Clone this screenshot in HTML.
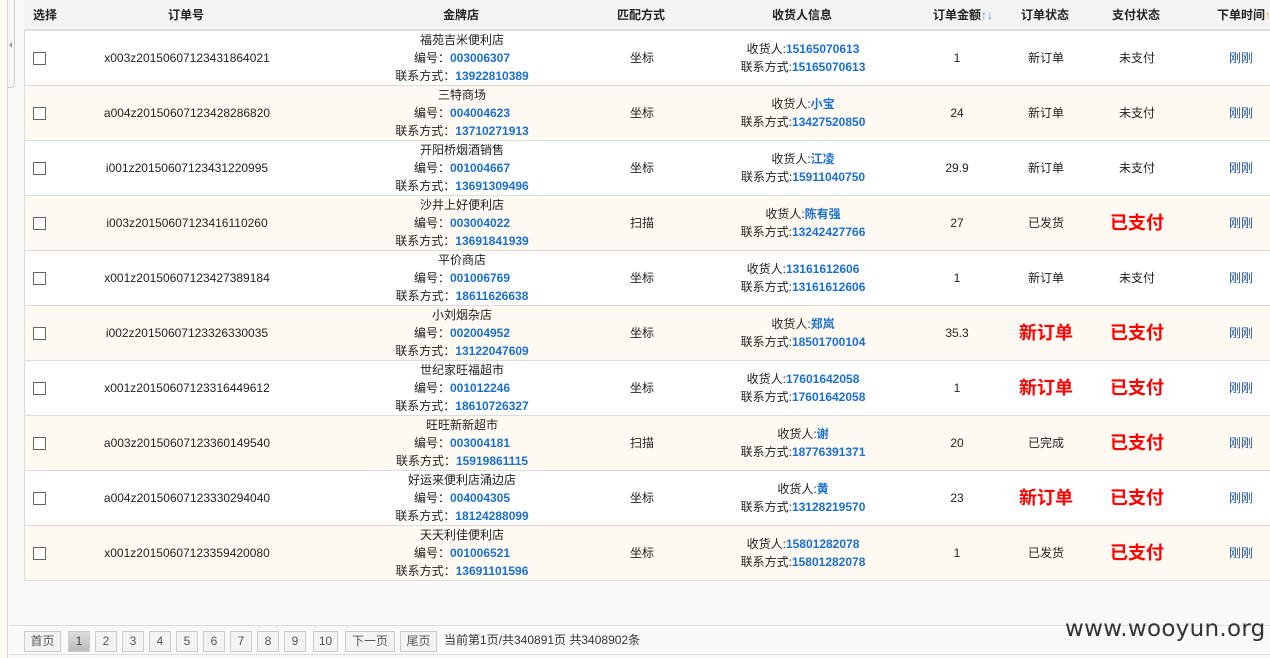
<!DOCTYPE html>
<html><head><meta charset="utf-8"><style>
*{margin:0;padding:0;box-sizing:border-box}
body{width:1270px;height:658px;overflow:hidden;background:#fafafa;font-family:"Liberation Sans","Noto Sans CJK SC",sans-serif;font-size:12px;color:#222;position:relative}
.strip{position:absolute;left:0;top:0;width:8px;height:658px;background:#fffaf0;border-right:1px solid #d8d8d8}
.bar{position:absolute;left:8px;top:0;width:7px;height:88px;border:1px solid #ccc;border-left:none;border-top:none;border-radius:0 0 4px 0;background:#f6f6f6}
.bar:after{content:"";position:absolute;left:1px;top:42px;border:3px solid transparent;border-right:3px solid #999;border-left:none}
.tbl{position:absolute;left:24px;top:0;width:1250px}
.row{display:flex;height:55px;border-bottom:1px solid #ddd;border-left:1px solid #ddd;align-items:center;position:relative}
.row.alt{background:#fffbf2}
.row.w{background:#fff}
.hd{height:31px;background:#f4f4f4;font-weight:bold;border-bottom:2px solid #ddd;border-left:none}
.c{flex-shrink:0;text-align:center;white-space:nowrap;display:flex;flex-direction:column;justify-content:center;align-items:center;line-height:18px;overflow:visible}
.c1{width:42px}.c2{width:240px}.c3{width:310px}.c4{width:50px}.c5{width:272px}.c6{width:36px}.c7{width:142px}.c8{width:40px}.c9{width:168px}
.b{color:#1a6fd0;font-weight:bold}
.red{color:#f00;font-weight:bold;font-size:18px}
.cb{position:absolute;left:8px;top:21px;width:13px;height:13px;border:1px solid #666;background:#fff}
.arr{color:#4a90d9;font-weight:normal}
.tm{color:#1a4f9a}
.pager{position:absolute;left:9px;top:625px;width:1261px;height:30px;border-top:1px solid #ddd;border-bottom:1px solid #ddd}
.pb{position:absolute;top:5px;height:21px;border:1px solid #ccc;background:#f4f4f4;color:#555;text-align:center;line-height:19px;font-size:12px}
.pb.on{background:linear-gradient(#ddd,#bbb);color:#444}
.pt{position:absolute;left:435px;top:5px;line-height:19px;color:#333}
.wm{position:absolute;left:1065px;top:616px;font-size:23px;color:#333;font-family:"DejaVu Sans","Liberation Sans",sans-serif;letter-spacing:0.3px}
</style></head><body>
<div class="strip"></div><div class="bar"></div>
<div class="tbl">
<div class="row hd"><div class="c c1">选择</div><div class="c c2">订单号</div><div class="c c3">金牌店</div><div class="c c4">匹配方式</div><div class="c c5">收货人信息</div><div class="c c6"><span style="margin-left:14px">订单金额<span class="arr">↑↓</span></span></div><div class="c c7">订单状态</div><div class="c c8">支付状态</div><div class="c c9"><span style="margin-left:8px">下单时间<span class="arr" style="color:#e8a050">↑</span></span></div></div>

<div class="row w"><span class="cb"></span><div class="c c1"></div><div class="c c2">x003z20150607123431864021</div><div class="c c3"><div>福苑吉米便利店</div><div>编号：<span class="b">003006307</span></div><div>联系方式：<span class="b">13922810389</span></div></div><div class="c c4">坐标</div><div class="c c5"><div>收货人:<span class="b">15165070613</span></div><div>联系方式:<span class="b">15165070613</span></div></div><div class="c c6">1</div><div class="c c7">新订单</div><div class="c c8">未支付</div><div class="c c9 tm">刚刚</div></div>

<div class="row alt"><span class="cb"></span><div class="c c1"></div><div class="c c2">a004z20150607123428286820</div><div class="c c3"><div>三特商场</div><div>编号：<span class="b">004004623</span></div><div>联系方式：<span class="b">13710271913</span></div></div><div class="c c4">坐标</div><div class="c c5"><div>收货人:<span class="b">小宝</span></div><div>联系方式:<span class="b">13427520850</span></div></div><div class="c c6">24</div><div class="c c7">新订单</div><div class="c c8">未支付</div><div class="c c9 tm">刚刚</div></div>

<div class="row w"><span class="cb"></span><div class="c c1"></div><div class="c c2">i001z20150607123431220995</div><div class="c c3"><div>开阳桥烟酒销售</div><div>编号：<span class="b">001004667</span></div><div>联系方式：<span class="b">13691309496</span></div></div><div class="c c4">坐标</div><div class="c c5"><div>收货人:<span class="b">江凌</span></div><div>联系方式:<span class="b">15911040750</span></div></div><div class="c c6">29.9</div><div class="c c7">新订单</div><div class="c c8">未支付</div><div class="c c9 tm">刚刚</div></div>

<div class="row alt"><span class="cb"></span><div class="c c1"></div><div class="c c2">i003z20150607123416110260</div><div class="c c3"><div>沙井上好便利店</div><div>编号：<span class="b">003004022</span></div><div>联系方式：<span class="b">13691841939</span></div></div><div class="c c4">扫描</div><div class="c c5"><div>收货人:<span class="b">陈有强</span></div><div>联系方式:<span class="b">13242427766</span></div></div><div class="c c6">27</div><div class="c c7">已发货</div><div class="c c8 red">已支付</div><div class="c c9 tm">刚刚</div></div>

<div class="row w"><span class="cb"></span><div class="c c1"></div><div class="c c2">x001z20150607123427389184</div><div class="c c3"><div>平价商店</div><div>编号：<span class="b">001006769</span></div><div>联系方式：<span class="b">18611626638</span></div></div><div class="c c4">坐标</div><div class="c c5"><div>收货人:<span class="b">13161612606</span></div><div>联系方式:<span class="b">13161612606</span></div></div><div class="c c6">1</div><div class="c c7">新订单</div><div class="c c8">未支付</div><div class="c c9 tm">刚刚</div></div>

<div class="row alt"><span class="cb"></span><div class="c c1"></div><div class="c c2">i002z20150607123326330035</div><div class="c c3"><div>小刘烟杂店</div><div>编号：<span class="b">002004952</span></div><div>联系方式：<span class="b">13122047609</span></div></div><div class="c c4">坐标</div><div class="c c5"><div>收货人:<span class="b">郑岚</span></div><div>联系方式:<span class="b">18501700104</span></div></div><div class="c c6">35.3</div><div class="c c7 red">新订单</div><div class="c c8 red">已支付</div><div class="c c9 tm">刚刚</div></div>

<div class="row w"><span class="cb"></span><div class="c c1"></div><div class="c c2">x001z20150607123316449612</div><div class="c c3"><div>世纪家旺福超市</div><div>编号：<span class="b">001012246</span></div><div>联系方式：<span class="b">18610726327</span></div></div><div class="c c4">坐标</div><div class="c c5"><div>收货人:<span class="b">17601642058</span></div><div>联系方式:<span class="b">17601642058</span></div></div><div class="c c6">1</div><div class="c c7 red">新订单</div><div class="c c8 red">已支付</div><div class="c c9 tm">刚刚</div></div>

<div class="row alt"><span class="cb"></span><div class="c c1"></div><div class="c c2">a003z20150607123360149540</div><div class="c c3"><div>旺旺新新超市</div><div>编号：<span class="b">003004181</span></div><div>联系方式：<span class="b">15919861115</span></div></div><div class="c c4">扫描</div><div class="c c5"><div>收货人:<span class="b">谢</span></div><div>联系方式:<span class="b">18776391371</span></div></div><div class="c c6">20</div><div class="c c7">已完成</div><div class="c c8 red">已支付</div><div class="c c9 tm">刚刚</div></div>

<div class="row w"><span class="cb"></span><div class="c c1"></div><div class="c c2">a004z20150607123330294040</div><div class="c c3"><div>好运来便利店涌边店</div><div>编号：<span class="b">004004305</span></div><div>联系方式：<span class="b">18124288099</span></div></div><div class="c c4">坐标</div><div class="c c5"><div>收货人:<span class="b">黄</span></div><div>联系方式:<span class="b">13128219570</span></div></div><div class="c c6">23</div><div class="c c7 red">新订单</div><div class="c c8 red">已支付</div><div class="c c9 tm">刚刚</div></div>

<div class="row alt"><span class="cb"></span><div class="c c1"></div><div class="c c2">x001z20150607123359420080</div><div class="c c3"><div>天天利佳便利店</div><div>编号：<span class="b">001006521</span></div><div>联系方式：<span class="b">13691101596</span></div></div><div class="c c4">坐标</div><div class="c c5"><div>收货人:<span class="b">15801282078</span></div><div>联系方式:<span class="b">15801282078</span></div></div><div class="c c6">1</div><div class="c c7">已发货</div><div class="c c8 red">已支付</div><div class="c c9 tm">刚刚</div></div>
</div>

<div class="pager">
<div class="pb" style="left:15px;width:37px">首页</div>
<div class="pb on" style="left:59px;width:22px">1</div>
<div class="pb" style="left:86px;width:22px">2</div>
<div class="pb" style="left:113px;width:22px">3</div>
<div class="pb" style="left:140px;width:22px">4</div>
<div class="pb" style="left:167px;width:22px">5</div>
<div class="pb" style="left:194px;width:22px">6</div>
<div class="pb" style="left:221px;width:22px">7</div>
<div class="pb" style="left:248px;width:22px">8</div>
<div class="pb" style="left:275px;width:22px">9</div>
<div class="pb" style="left:304px;width:25px">10</div>
<div class="pb" style="left:336px;width:50px">下一页</div>
<div class="pb" style="left:391px;width:37px">尾页</div>
<div class="pt">当前第1页/共340891页 共3408902条</div>
</div>
<div class="wm">www.wooyun.org</div>
</body></html>
